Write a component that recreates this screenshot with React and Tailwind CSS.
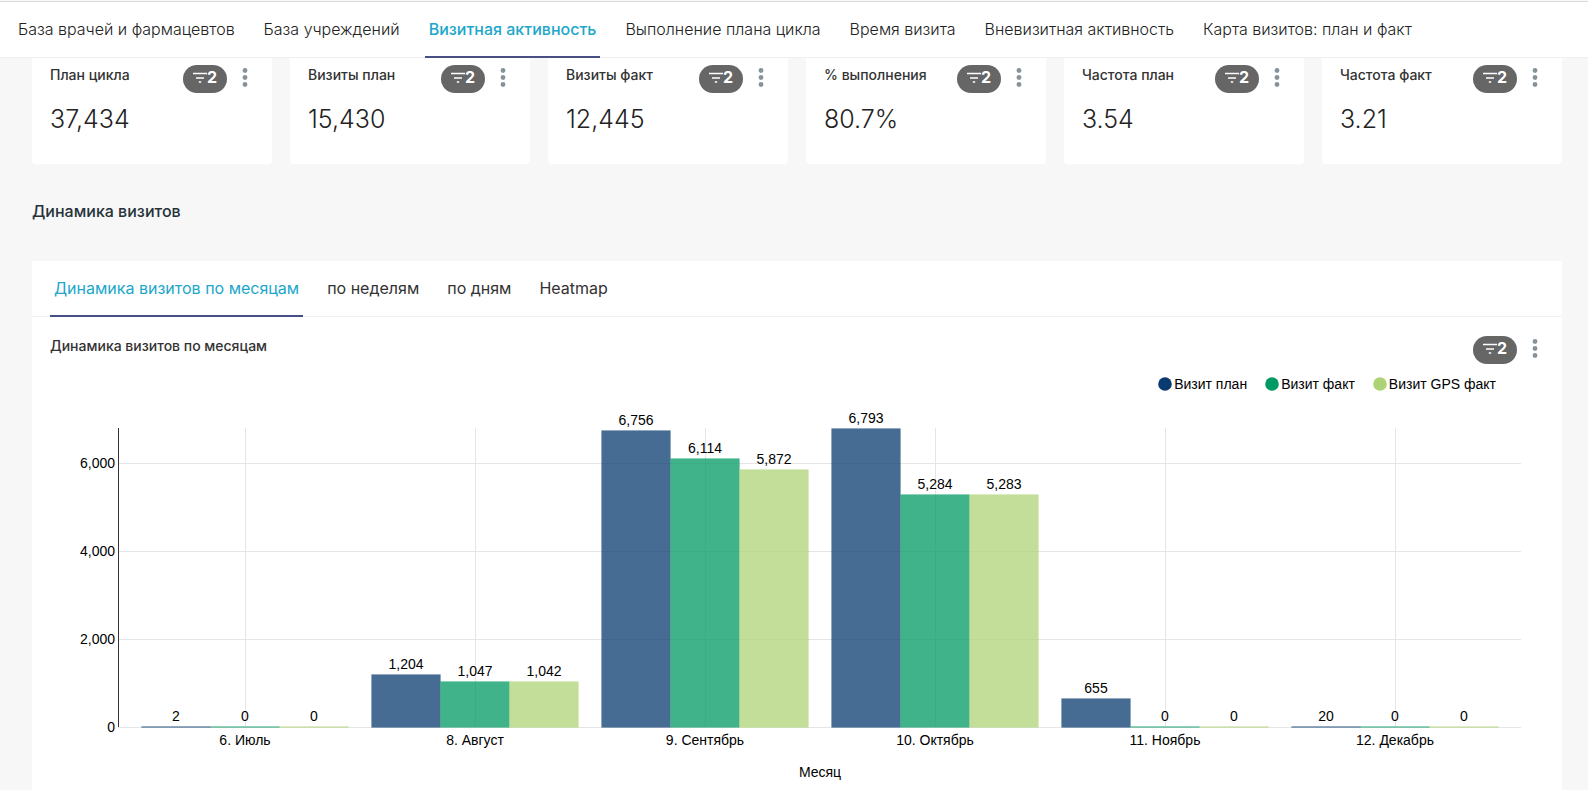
import { useEffect, useRef, useState } from "react";

const navTabs = [
  "База врачей и фармацевтов",
  "База учреждений",
  "Визитная активность",
  "Выполнение плана цикла",
  "Время визита",
  "Вневизитная активность",
  "Карта визитов: план и факт",
];

const metrics = [
  ["План цикла", "37,434"],
  ["Визиты план", "15,430"],
  ["Визиты факт", "12,445"],
  ["% выполнения", "80.7%"],
  ["Частота план", "3.54"],
  ["Частота факт", "3.21"],
];

const chartTabs = ["Динамика визитов по месяцам", "по неделям", "по дням", "Heatmap"];

const series = [
  { name: "Визит план", color: "#093b6f" },
  { name: "Визит факт", color: "#029a63" },
  { name: "Визит GPS факт", color: "#aed376" },
];

const months = [
  { label: "6. Июль", values: [2, 0, 0] },
  { label: "8. Август", values: [1204, 1047, 1042] },
  { label: "9. Сентябрь", values: [6756, 6114, 5872] },
  { label: "10. Октябрь", values: [6793, 5284, 5283] },
  { label: "11. Ноябрь", values: [655, 0, 0] },
  { label: "12. Декабрь", values: [20, 0, 0] },
];

const format = (n) => n.toLocaleString("en-US");

function CardTools() {
  return (
    <div className="flex items-start">
      <button
        type="button"
        aria-label="Применено фильтров: 2"
        className="flex h-7 w-11 items-start justify-center rounded-full bg-[#666666] pt-[2px] text-base leading-5 font-bold text-white"
      >
        <svg viewBox="0 0 14 14" className="mt-1 h-[14px] w-[14px]" aria-hidden="true">
          <path d="M0 2.5h14M3 7h8M5.8 11h2.4" stroke="currentColor" strokeWidth="1.4" fill="none" />
        </svg>
        <span>2</span>
      </button>
      <button type="button" aria-label="Меню" className="mt-[3px] ml-3 flex w-3 justify-center text-[#879399]">
        <svg viewBox="0 0 6 20" className="h-5 w-[6px]" fill="currentColor" aria-hidden="true">
          <circle cx="3" cy="2.5" r="2.4" />
          <circle cx="3" cy="9.5" r="2.4" />
          <circle cx="3" cy="16.5" r="2.4" />
        </svg>
      </button>
    </div>
  );
}

function MetricCard({ title, value }) {
  return (
    <article className="rounded-b bg-white pr-[21px] pb-[27px] pl-[18px]">
      <div className="flex items-start justify-between pt-[7px]">
        <h3 className="pt-[2px] text-sm leading-4 font-medium text-[#333333]">{title}</h3>
        <CardTools />
      </div>
      <p className="mt-2 text-[25px] leading-9 font-light text-[#222222]">{value}</p>
    </article>
  );
}

function VisitsChart() {
  const ref = useRef(null);
  const [width, setWidth] = useState(1494);

  useEffect(() => {
    const observer = new ResizeObserver(([entry]) => setWidth(entry.contentRect.width));
    observer.observe(ref.current);
    return () => observer.disconnect();
  }, []);

  const left = 68;
  const right = width - 23;
  const base = 334;
  const top = 35;
  const max = 6793;
  const y = (v) => Math.round(base - (v / max) * (base - top));
  const step = (right - left) / 6.1;
  const bar = (step * 0.9) / 3;

  return (
    <div ref={ref} className="w-full">
      <svg width={width} height={397} role="img" aria-label="Динамика визитов по месяцам" className="block font-['Liberation_Sans',Arial,sans-serif] text-sm">
        <g stroke="#e5e5e5" shapeRendering="crispEdges">
          {[0, 2000, 4000, 6000].map((v) => (
            <line key={v} x1={left} x2={right} y1={y(v) + 0.5} y2={y(v) + 0.5} />
          ))}
          {months.map((m, i) => {
            const x = Math.round(left + step * (i + 0.55)) + 0.5;
            return <line key={m.label} x1={x} x2={x} y1={top} y2={base} />;
          })}
        </g>
        <line x1={left + 0.5} x2={left + 0.5} y1={top} y2={base} stroke="#333333" shapeRendering="crispEdges" />
        {months.map((m, i) =>
          m.values.map((v, j) => {
            const x = Math.round(left + step * (i + 0.1) + bar * j);
            const next = Math.round(left + step * (i + 0.1) + bar * (j + 1));
            const h = Math.max(base - y(v), 1);
            return (
              <rect
                key={m.label + j}
                x={x + 0.5}
                y={base - h + 0.5}
                width={next - x}
                height={h}
                fill={series[j].color}
                fillOpacity="0.75"
                stroke={series[j].color}
                strokeOpacity="0.1"
              />
            );
          }),
        )}
        <g fill="#000000" textAnchor="middle">
          {months.map((m, i) =>
            m.values.map((v, j) => (
              <text key={m.label + j} x={Math.round(left + step * (i + 0.1) + bar * (j + 0.5))} y={Math.min(y(v), base - 1) - 5}>
                {format(v)}
              </text>
            )),
          )}
          {months.map((m, i) => (
            <text key={m.label} x={Math.round(left + step * (i + 0.55))} y={base + 18}>
              {m.label}
            </text>
          ))}
          <text x={Math.round((left + right) / 2)} y={base + 50}>Месяц</text>
        </g>
        <g fill="#000000" textAnchor="end">
          {[0, 2000, 4000, 6000].map((v) => (
            <text key={v} x={left - 3} y={y(v) + 5}>
              {format(v)}
            </text>
          ))}
        </g>
      </svg>
    </div>
  );
}

export default function App() {
  return (
    <div className="flex min-h-screen flex-col bg-[#f7f7f7] pt-px font-['Inter',sans-serif]">
      <nav className="flex h-[57px] gap-[21px] border-t border-b border-t-[#dcdcdc] border-b-[#f0f0f0] bg-white px-[14px]">
        {navTabs.map((t, i) => (
          <a
            key={t}
            href="#"
            aria-current={i === 2 ? "page" : undefined}
            className={
              i === 2
                ? "-mb-px border-b-2 border-[#484f86] px-1 pt-[17px] text-base leading-5 font-medium whitespace-nowrap text-[#20a7c9]"
                : "px-1 pt-[17px] text-base leading-5 font-light whitespace-nowrap text-[#222222]"
            }
          >
            {t}
          </a>
        ))}
      </nav>

      <main className="flex grow flex-col pr-[26px] pl-8">
        <section className="grid grid-cols-6 gap-[18px]">
          {metrics.map(([title, value]) => (
            <MetricCard key={title} title={title} value={value} />
          ))}
        </section>

        <h2 className="mt-[35px] text-base leading-6 font-medium text-[#263238]">Динамика визитов</h2>

        <section className="mt-[38px] grow bg-white">
          <div role="tablist" className="flex h-14 gap-5 border-b border-[#f0f0f0] px-[18px]">
            {chartTabs.map((t, i) => (
              <button
                key={t}
                type="button"
                role="tab"
                aria-selected={i === 0}
                className={
                  i === 0
                    ? "-mb-px border-b-2 border-[#484f86] px-1 text-base leading-5 text-[#20a7c9]"
                    : "-mb-px border-b-2 border-transparent px-1 text-base leading-5 text-[#323232]"
                }
              >
                {t}
              </button>
            ))}
          </div>

          <div className="px-[18px] pt-[19px]">
            <div className="flex items-start justify-between pr-[3px]">
              <h3 className="text-sm leading-5 font-medium text-[#333333]">Динамика визитов по месяцам</h3>
              <CardTools />
            </div>
            <ul className="mt-3 mr-12 mb-px flex h-4 justify-end gap-[18px] font-['Liberation_Sans',Arial,sans-serif] text-sm leading-4 text-black">
              {series.map((s) => (
                <li key={s.name} className="flex items-center gap-[2px]">
                  <svg viewBox="0 0 14 14" className="size-[14px]" aria-hidden="true">
                    <circle cx="7" cy="7" r="6.8" fill={s.color} />
                  </svg>
                  {s.name}
                </li>
              ))}
            </ul>
            <VisitsChart />
          </div>
        </section>
      </main>
    </div>
  );
}
